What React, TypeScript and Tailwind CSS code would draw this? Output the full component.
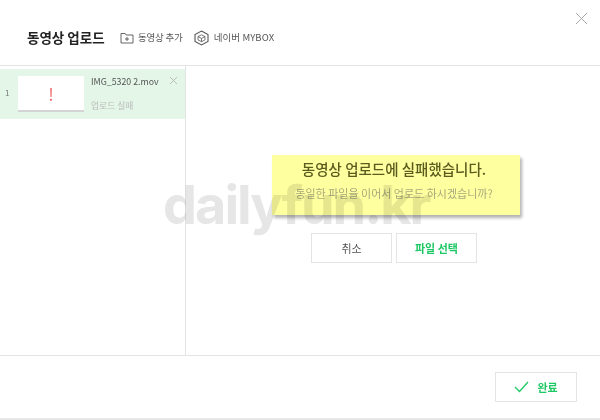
import React from 'react';

const FONT = "font-['Noto_Sans_CJK_KR','Noto_Sans',sans-serif]";

export default function App() {
  return (
    <div className={`relative w-[600px] h-[420px] bg-white overflow-hidden flex flex-col ${FONT}`}>
      {/* header */}
      <header className="h-[66px] shrink-0 border-b border-[#e4e4e4] flex items-center pl-[27px] pt-[10px] relative">
        <h1 className="text-[13.5px] font-bold text-[#222] leading-none w-[93px]">동영상 업로드</h1>
        <button className="flex items-center gap-[4px] text-[9.5px] text-[#555] leading-none tracking-[-0.2px]">
          <svg width="14" height="12" viewBox="0 0 14 12" fill="none" stroke="#555" strokeWidth="0.9">
            <path d="M1 1.5h4.2l1 1.5H13v8H1z" />
            <path d="M7 5v4M5 7h4" />
          </svg>
          동영상 추가
        </button>
        <button className="ml-[11px] flex items-center gap-[5px] text-[9.5px] text-[#555] leading-none tracking-[0.1px]">
          <svg width="15" height="16" viewBox="0 0 15 16" fill="none" stroke="#555">
            <path d="M7.5 1 14 4.5v7L7.5 15 1 11.5v-7z" strokeWidth="1.1" />
            <path d="M7.5 4.8 11 6.6v3.3l-3.5 1.8L4 9.9V6.6zM4 6.6l3.5 1.8L11 6.6M7.5 8.4v3.3" strokeWidth="0.8" />
          </svg>
          네이버 MYBOX
        </button>
        <button className="absolute right-[12px] top-[12px] text-[#aaa]">
          <svg width="13" height="13" viewBox="0 0 13 13" fill="none" stroke="currentColor" strokeWidth="1">
            <path d="M1 1l11 11M12 1 1 12" />
          </svg>
        </button>
      </header>

      {/* body */}
      <div className="flex-1 flex min-h-0">
        <aside className="w-[186px] shrink-0 border-r border-[#e4e4e4] pt-[3px]">
          <div className="h-[50px] bg-[#e3f6e7] flex items-center relative">
            <span className="w-[18px] pl-[5px] text-[8px] text-[#777] mb-[2px]">1</span>
            <div className="w-[66px] h-[36px] bg-white border-b-[2px] border-[#d4d4d4] flex items-center justify-center">
              <span className="text-[#ef6a6a] text-[17px] leading-none font-normal">!</span>
            </div>
            <div className="ml-[7px] h-[36px] flex flex-col justify-between">
              <span className="text-[8.8px] text-[#555] leading-[12px]">IMG_5320 2.mov</span>
              <span className="text-[8.8px] text-[#bbb] leading-[12px]">업로드 실패</span>
            </div>
            <button className="absolute right-[8px] top-[8px] text-[#aaa]">
              <svg width="7" height="7" viewBox="0 0 7 7" fill="none" stroke="currentColor" strokeWidth="0.7">
                <path d="M0 0l7 7M7 0 0 7" />
              </svg>
            </button>
          </div>
        </aside>

        <main className="flex-1 flex flex-col items-center pt-[89px]">
          <div className="relative z-20 w-[248px] h-[60px] ml-[6px] pr-[4px] bg-[#feff9e] shadow-[2px_3px_3px_rgba(0,0,0,0.3)] flex flex-col items-center pt-[4px]">
            <p className="text-[14.5px] leading-[20px] text-[#5b5b1e] font-medium whitespace-nowrap">동영상 업로드에 실패했습니다.</p>
            <p className="text-[11px] leading-[14px] mt-[7px] text-[#a8a87c] whitespace-nowrap">동일한 파일을 이어서 업로드 하시겠습니까?</p>
          </div>
          <div className="relative z-20 flex gap-[4px] mt-[18px] ml-[2px]">
            <button className="w-[81px] h-[30px] bg-white border border-[#e4e4e4] text-[11px] text-[#555] flex items-center justify-center">취소</button>
            <button className="w-[81px] h-[30px] bg-white border border-[#e4e4e4] text-[11px] font-bold text-[#1ec864] flex items-center justify-center">파일 선택</button>
          </div>
        </main>
      </div>

      {/* footer */}
      <footer className="h-[63px] shrink-0 border-t border-[#e4e4e4] flex items-center justify-end pr-[23px]">
        <button className="w-[82px] h-[30px] bg-white border border-[#e4e4e4] flex items-center justify-center gap-[8px] text-[11px] font-bold text-[#1ec864]">
          <svg width="15" height="12" viewBox="0 0 15 12" fill="none" stroke="#1ec864" strokeWidth="1.3">
            <path d="M1 6l4.5 4.5L14 1" />
          </svg>
          완료
        </button>
      </footer>
      <div className="h-[2px] shrink-0 bg-[#e8e8e8]" />

      {/* watermark */}
      <div className="absolute z-30 left-[163px] top-[170px] text-[54px] leading-[70px] font-bold tracking-[-2px] text-[#e6e6e6] mix-blend-multiply font-['Inter',sans-serif] whitespace-nowrap pointer-events-none">
        dailyfun.kr
      </div>
    </div>
  );
}
